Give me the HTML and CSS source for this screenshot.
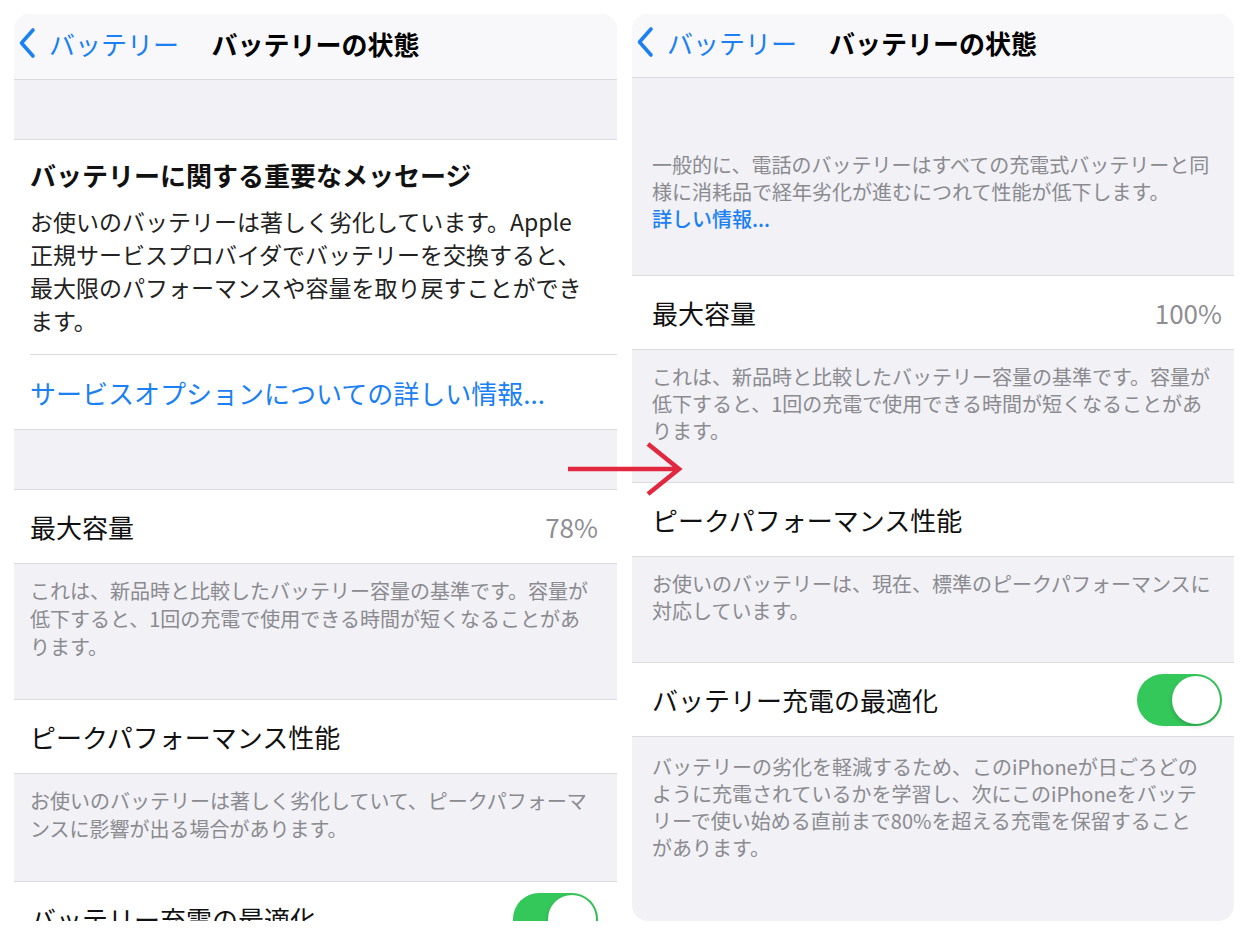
FILE: index.html
```html
<!DOCTYPE html>
<html lang="ja">
<head>
    <meta charset="UTF-8">
    <meta name="viewport" content="width=device-width, initial-scale=1.0">
    <title>バッテリーの状態</title>
    <link rel="stylesheet" href="styles.css">
</head>
<body>
    <main class="compare">
        <!-- before: degraded battery -->
        <section class="phone phone-left">
            <header class="nav">
                <a class="nav-back" href="#">
                    <svg class="chevron" viewBox="0 0 20 32" width="20" height="32"><path d="M15 3 L3.5 16 L15 29"/></svg>
                    <span>バッテリー</span>
                </a>
                <h1 class="nav-title">バッテリーの状態</h1>
                <span></span>
            </header>

            <div class="spacer"></div>

            <div class="group">
                <div class="message">
                    <h2 class="message-title">バッテリーに関する重要なメッセージ</h2>
                    <p class="message-body">お使いのバッテリーは著しく劣化しています。Apple<br>正規サービスプロバイダでバッテリーを交換すると、<br>最大限のパフォーマンスや容量を取り戻すことができ<br>ます。</p>
                </div>
                <div class="link-row">
                    <a class="link" href="#">サービスオプションについての詳しい情報...</a>
                </div>
            </div>

            <div class="spacer"></div>

            <div class="group">
                <div class="row">
                    <span class="label">最大容量</span>
                    <span class="value">78%</span>
                </div>
            </div>
            <p class="note">これは、新品時と比較したバッテリー容量の基準です。容量が<br>低下すると、1回の充電で使用できる時間が短くなることがあ<br>ります。</p>

            <div class="group">
                <div class="row">
                    <span class="label">ピークパフォーマンス性能</span>
                </div>
            </div>
            <p class="note">お使いのバッテリーは著しく劣化していて、ピークパフォーマ<br>ンスに影響が出る場合があります。</p>

            <div class="group">
                <div class="row">
                    <span class="label">バッテリー充電の最適化</span>
                    <span class="switch"><span class="knob"></span></span>
                </div>
            </div>
        </section>

        <svg class="arrow" viewBox="0 0 120 56" width="120" height="56">
            <path d="M2 28 H113 M82 3 L113 28 L82 53"/>
        </svg>

        <!-- after: new battery -->
        <section class="phone phone-right">
            <header class="nav">
                <a class="nav-back" href="#">
                    <svg class="chevron" viewBox="0 0 20 32" width="20" height="32"><path d="M15 3 L3.5 16 L15 29"/></svg>
                    <span>バッテリー</span>
                </a>
                <h1 class="nav-title">バッテリーの状態</h1>
                <span></span>
            </header>

            <p class="note note-intro">一般的に、電話のバッテリーはすべての充電式バッテリーと同<br>様に消耗品で経年劣化が進むにつれて性能が低下します。<br><a class="note-link" href="#">詳しい情報...</a></p>

            <div class="group">
                <div class="row">
                    <span class="label">最大容量</span>
                    <span class="value">100%</span>
                </div>
            </div>
            <p class="note">これは、新品時と比較したバッテリー容量の基準です。容量が<br>低下すると、1回の充電で使用できる時間が短くなることがあ<br>ります。</p>

            <div class="group">
                <div class="row">
                    <span class="label">ピークパフォーマンス性能</span>
                </div>
            </div>
            <p class="note">お使いのバッテリーは、現在、標準のピークパフォーマンスに<br>対応しています。</p>

            <div class="group">
                <div class="row">
                    <span class="label">バッテリー充電の最適化</span>
                    <span class="switch"><span class="knob"></span></span>
                </div>
            </div>
            <p class="note note-last">バッテリーの劣化を軽減するため、このiPhoneが日ごろどの<br>ように充電されているかを学習し、次にこのiPhoneをバッテ<br>リーで使い始める直前まで80%を超える充電を保留すること<br>があります。</p>
        </section>
    </main>
</body>
</html>
```

FILE: styles.css
```css
body {
    margin: 0;
    background-color: #ffffff;
    font-family: "Noto Sans CJK JP", "Noto Sans", sans-serif;
    color: #111111;
}
.compare {
    position: relative;
    display: flex;
    gap: 15px;
    padding: 14px 0 0 14px;
}
.phone {
    display: flex;
    flex-direction: column;
    width: 603px;
    height: 907px;
    overflow: hidden;
    border-radius: 16px;
    background-color: #f1f1f6;
}
.phone-left {
    --pad-l: 16px;
    --pad-r: 19px;
    --nav-h: 66px;
    --note-lh: 28px;
}
.phone-right {
    width: 602px;
    --pad-l: 20px;
    --pad-r: 12px;
    --nav-h: 64px;
    --note-lh: 27px;
}

/* navigation bar */
.nav {
    box-sizing: border-box;
    flex-shrink: 0;
    height: var(--nav-h);
    padding-bottom: 7px;
    display: grid;
    grid-template-columns: 1fr auto 1fr;
    align-items: center;
    background-color: #f8f8fa;
    border-bottom: 1px solid #d9d9de;
}
.nav-back {
    display: flex;
    align-items: center;
    gap: 11px;
    padding-left: 4px;
    font-size: 26px;
    color: #1a80f4;
    text-decoration: none;
}
.chevron path {
    fill: none;
    stroke: #1a80f4;
    stroke-width: 3.6;
    stroke-linecap: round;
    stroke-linejoin: round;
}
.nav-title {
    margin: 0;
    font-size: 26px;
    font-weight: 700;
    color: #000000;
}

.spacer {
    flex-shrink: 0;
    height: 59px;
}

/* white groups */
.group {
    flex-shrink: 0;
    background-color: #ffffff;
    border-top: 1px solid #dcdce0;
    border-bottom: 1px solid #dcdce0;
}
.row {
    height: 73px;
    display: flex;
    align-items: center;
    justify-content: space-between;
    padding: 0 var(--pad-r) 0 var(--pad-l);
}
.label {
    font-size: 26px;
}
.value {
    font-size: 26px;
    color: #8e8e93;
}

.message {
    padding: 18px var(--pad-r) 17px var(--pad-l);
}
.message-title {
    margin: 0;
    font-size: 26px;
    line-height: 34px;
    font-weight: 700;
}
.message-body {
    margin: 13px 0 0;
    font-size: 23px;
    line-height: 33px;
    color: #222222;
}
.link-row {
    height: 74px;
    display: flex;
    align-items: center;
    margin-left: var(--pad-l);
    border-top: 1px solid #dcdce0;
}
.link {
    font-size: 26px;
    color: #1a80f4;
    text-decoration: none;
}

/* gray footers */
.note {
    flex-shrink: 0;
    margin: 0;
    padding: 13px var(--pad-r) 38px var(--pad-l);
    font-size: 20px;
    line-height: var(--note-lh);
    color: #8a8a8f;
}
.note-intro {
    padding-top: 73px;
    padding-bottom: 43px;
}
.note-last {
    padding-top: 16px;
}
.note-link {
    color: #1a80f4;
    font-weight: 500;
    text-decoration: none;
}

/* toggle */
.switch {
    box-sizing: border-box;
    width: 85px;
    height: 52px;
    padding: 2px;
    display: flex;
    justify-content: flex-end;
    border-radius: 26px;
    background-color: #34c759;
}
.knob {
    width: 48px;
    height: 48px;
    border-radius: 50%;
    background-color: #ffffff;
    box-shadow: 0 2px 4px rgba(0, 0, 0, 0.2);
}

/* red arrow drawn over both screenshots */
.arrow {
    position: absolute;
    left: 566px;
    top: 441px;
}
.arrow path {
    fill: none;
    stroke: #e2283f;
    stroke-width: 4.5;
    stroke-linecap: butt;
}
```
